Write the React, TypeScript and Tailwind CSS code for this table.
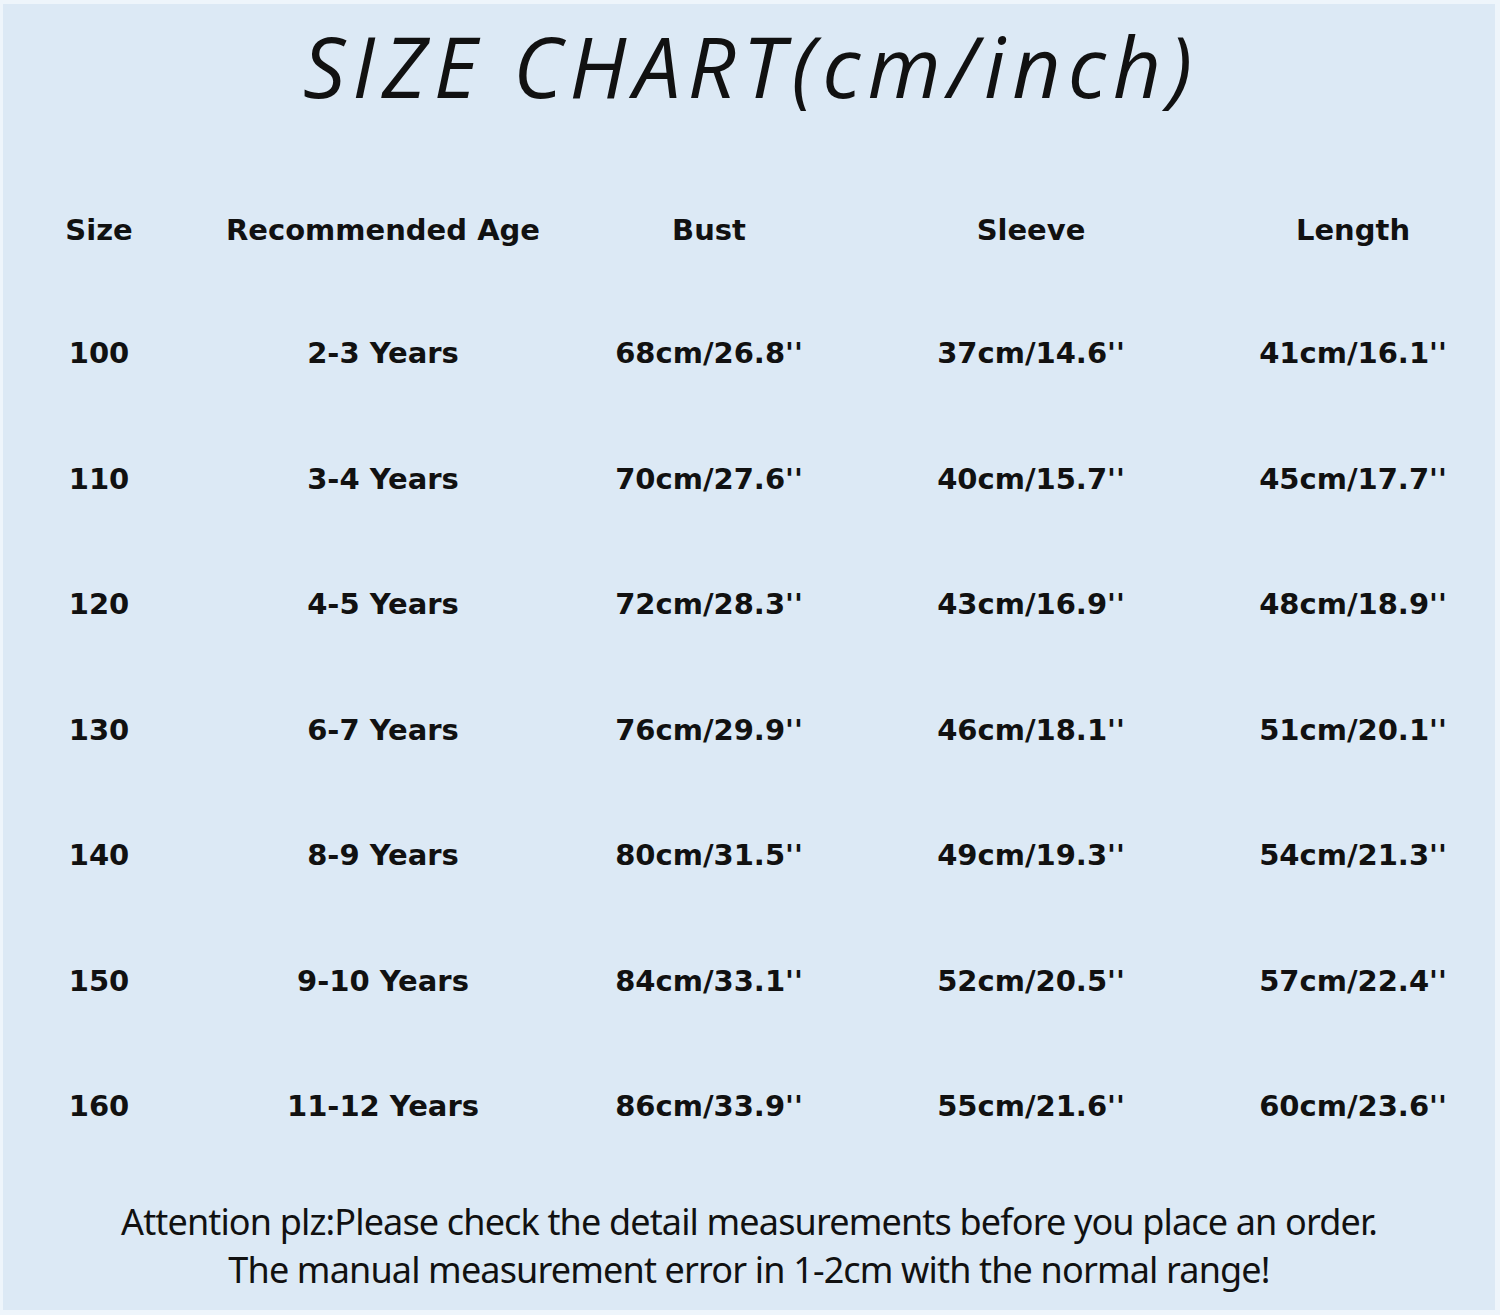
const headers = ["Size", "Recommended Age", "Bust", "Sleeve", "Length"];

const rows = [
  ["100", "2-3 Years", "68cm/26.8''", "37cm/14.6''", "41cm/16.1''"],
  ["110", "3-4 Years", "70cm/27.6''", "40cm/15.7''", "45cm/17.7''"],
  ["120", "4-5 Years", "72cm/28.3''", "43cm/16.9''", "48cm/18.9''"],
  ["130", "6-7 Years", "76cm/29.9''", "46cm/18.1''", "51cm/20.1''"],
  ["140", "8-9 Years", "80cm/31.5''", "49cm/19.3''", "54cm/21.3''"],
  ["150", "9-10 Years", "84cm/33.1''", "52cm/20.5''", "57cm/22.4''"],
  ["160", "11-12 Years", "86cm/33.9''", "55cm/21.6''", "60cm/23.6''"],
];

const cols = "grid grid-cols-[192px_376px_276px_368px_276px]";

export default function App() {
  return (
    <div className="w-[1500px] h-[1315px] bg-[#eef5fb] pt-[4px] pl-[3px] pr-[5px] pb-[5px]">
      <div className="h-full bg-[#dce9f5] text-[#111] flex flex-col">
        {/* title */}
        <div className="h-[150px] flex items-center justify-center">
          <h1 className="text-[84px] italic font-normal tracking-[7px] font-['Open_Sans',sans-serif] leading-none pl-[4px] -mt-[26px]">
            SIZE CHART(cm/inch)
          </h1>
        </div>

        {/* table */}
        <div className="font-['DejaVu_Sans',sans-serif] font-bold text-[29px]">
          <div className={`${cols} h-[137px] pt-[16px] items-center`}>
            {headers.map((h) => (
              <div key={h} className="text-center">{h}</div>
            ))}
          </div>
          {rows.map((r) => (
            <div key={r[0]} className={`${cols} h-[125.5px] items-center`}>
              {r.map((c, i) => (
                <div key={i} className="text-center">{c}</div>
              ))}
            </div>
          ))}
        </div>

        {/* note */}
        <div className="mt-[28px] text-center font-['Noto_Sans',sans-serif] text-[36px] leading-[48px] tracking-[-0.85px]">
          <p>Attention plz:Please check the detail measurements before you place an order.</p>
          <p>The manual measurement error in 1-2cm with the normal range!</p>
        </div>
      </div>
    </div>
  );
}
